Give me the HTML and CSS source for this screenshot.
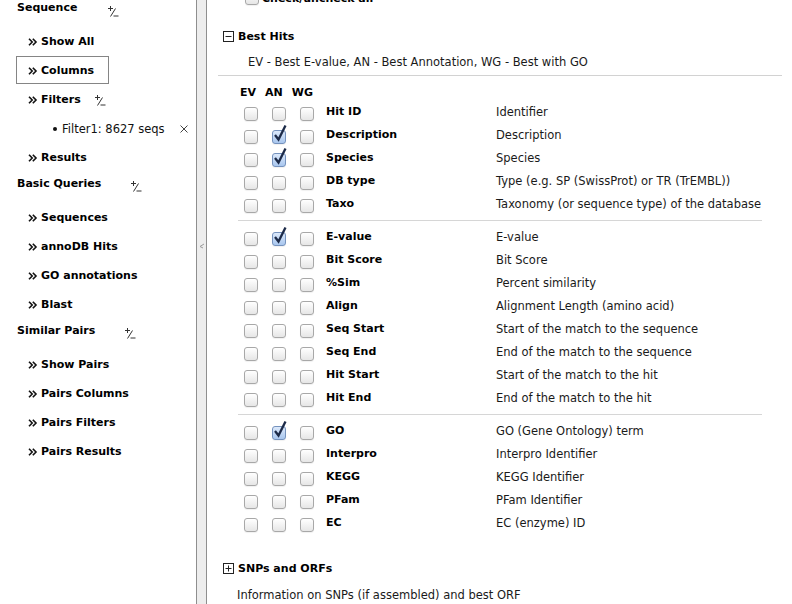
FILE: index.html
```html
<!DOCTYPE html>
<html>
<head>
<meta charset="utf-8">
<link rel="stylesheet" href="styles.css">
</head>
<body>
<div class="app">
  <nav class="nav">
    <div class="section">
      <div class="section-head">Sequence<svg class="pm pm-head pm-seq" width="12" height="12" viewBox="0 0 12 12"><path d="M1 3.5H6M3.5 1V6M3.5 11.5L8.5 3.5M6.5 11H11.5"/></svg></div>
      <div class="item"><svg class="raq" width="13" height="8" viewBox="0 0 13 8"><path d="M1 0.8L4.2 4L1 7.2M4.8 0.8L8 4L4.8 7.2"/></svg>Show All</div>
      <div class="item item-boxed"><svg class="raq" width="13" height="8" viewBox="0 0 13 8"><path d="M1 0.8L4.2 4L1 7.2M4.8 0.8L8 4L4.8 7.2"/></svg>Columns</div>
      <div class="item"><svg class="raq" width="13" height="8" viewBox="0 0 13 8"><path d="M1 0.8L4.2 4L1 7.2M4.8 0.8L8 4L4.8 7.2"/></svg>Filters<svg class="pm pm-filters" width="12" height="12" viewBox="0 0 12 12"><path d="M1 3.5H6M3.5 1V6M3.5 11.5L8.5 3.5M6.5 11H11.5"/></svg></div>
      <div class="item filter"><span class="dot"></span><span class="filter-text">Filter1: 8627 seqs</span><svg class="x" width="8" height="8" viewBox="0 0 8 8"><path d="M0.5 0.5L7.5 7.5M7.5 0.5L0.5 7.5"/></svg></div>
      <div class="item"><svg class="raq" width="13" height="8" viewBox="0 0 13 8"><path d="M1 0.8L4.2 4L1 7.2M4.8 0.8L8 4L4.8 7.2"/></svg>Results</div>
    </div>
    <div class="section">
      <div class="section-head">Basic Queries<svg class="pm pm-head" width="12" height="12" viewBox="0 0 12 12"><path d="M1 3.5H6M3.5 1V6M3.5 11.5L8.5 3.5M6.5 11H11.5"/></svg></div>
      <div class="item"><svg class="raq" width="13" height="8" viewBox="0 0 13 8"><path d="M1 0.8L4.2 4L1 7.2M4.8 0.8L8 4L4.8 7.2"/></svg>Sequences</div>
      <div class="item"><svg class="raq" width="13" height="8" viewBox="0 0 13 8"><path d="M1 0.8L4.2 4L1 7.2M4.8 0.8L8 4L4.8 7.2"/></svg>annoDB Hits</div>
      <div class="item"><svg class="raq" width="13" height="8" viewBox="0 0 13 8"><path d="M1 0.8L4.2 4L1 7.2M4.8 0.8L8 4L4.8 7.2"/></svg>GO annotations</div>
      <div class="item"><svg class="raq" width="13" height="8" viewBox="0 0 13 8"><path d="M1 0.8L4.2 4L1 7.2M4.8 0.8L8 4L4.8 7.2"/></svg>Blast</div>
    </div>
    <div class="section">
      <div class="section-head">Similar Pairs<svg class="pm pm-head" width="12" height="12" viewBox="0 0 12 12"><path d="M1 3.5H6M3.5 1V6M3.5 11.5L8.5 3.5M6.5 11H11.5"/></svg></div>
      <div class="item"><svg class="raq" width="13" height="8" viewBox="0 0 13 8"><path d="M1 0.8L4.2 4L1 7.2M4.8 0.8L8 4L4.8 7.2"/></svg>Show Pairs</div>
      <div class="item"><svg class="raq" width="13" height="8" viewBox="0 0 13 8"><path d="M1 0.8L4.2 4L1 7.2M4.8 0.8L8 4L4.8 7.2"/></svg>Pairs Columns</div>
      <div class="item"><svg class="raq" width="13" height="8" viewBox="0 0 13 8"><path d="M1 0.8L4.2 4L1 7.2M4.8 0.8L8 4L4.8 7.2"/></svg>Pairs Filters</div>
      <div class="item"><svg class="raq" width="13" height="8" viewBox="0 0 13 8"><path d="M1 0.8L4.2 4L1 7.2M4.8 0.8L8 4L4.8 7.2"/></svg>Pairs Results</div>
    </div>
  </nav>
  <div class="splitter"><svg class="grip" width="6" height="6" viewBox="0 0 6 6"><path d="M5 1L1 3.5L4 5"/></svg></div>
  <main class="main">
    <div class="check-all"><span class="cb"></span><span class="check-all-label">Check/uncheck all</span></div>

    <div class="group-head"><svg class="tog" width="11" height="11" viewBox="0 0 11 11"><rect x="0.5" y="0.5" width="10" height="10"/><path d="M2.5 5.5H8.5"/></svg>Best Hits</div>
    <div class="hint">EV - Best E-value, AN - Best Annotation, WG - Best with GO</div>
    <div class="rule"></div>

    <div class="table">
      <div class="thead"><span>EV</span><span>AN</span><span>WG</span></div>
      <div class="rows">
        <div class="row"><span class="cb"></span><span class="cb"></span><span class="cb"></span><span class="lbl">Hit ID</span><span class="desc">Identifier</span></div>
        <div class="row"><span class="cb"></span><span class="cb on"><svg class="tick" width="14" height="20" viewBox="0 0 14 20"><path d="M2 11L5.5 15.5L12.5 1.5"/></svg></span><span class="cb"></span><span class="lbl">Description</span><span class="desc">Description</span></div>
        <div class="row"><span class="cb"></span><span class="cb on"><svg class="tick" width="14" height="20" viewBox="0 0 14 20"><path d="M2 11L5.5 15.5L12.5 1.5"/></svg></span><span class="cb"></span><span class="lbl">Species</span><span class="desc">Species</span></div>
        <div class="row"><span class="cb"></span><span class="cb"></span><span class="cb"></span><span class="lbl">DB type</span><span class="desc">Type (e.g. SP (SwissProt) or TR (TrEMBL))</span></div>
        <div class="row"><span class="cb"></span><span class="cb"></span><span class="cb"></span><span class="lbl">Taxo</span><span class="desc">Taxonomy (or sequence type) of the database</span></div>
      </div>
      <div class="sep"></div>
      <div class="rows">
        <div class="row"><span class="cb"></span><span class="cb on"><svg class="tick" width="14" height="20" viewBox="0 0 14 20"><path d="M2 11L5.5 15.5L12.5 1.5"/></svg></span><span class="cb"></span><span class="lbl">E-value</span><span class="desc">E-value</span></div>
        <div class="row"><span class="cb"></span><span class="cb"></span><span class="cb"></span><span class="lbl">Bit Score</span><span class="desc">Bit Score</span></div>
        <div class="row"><span class="cb"></span><span class="cb"></span><span class="cb"></span><span class="lbl">%Sim</span><span class="desc">Percent similarity</span></div>
        <div class="row"><span class="cb"></span><span class="cb"></span><span class="cb"></span><span class="lbl">Align</span><span class="desc">Alignment Length (amino acid)</span></div>
        <div class="row"><span class="cb"></span><span class="cb"></span><span class="cb"></span><span class="lbl">Seq Start</span><span class="desc">Start of the match to the sequence</span></div>
        <div class="row"><span class="cb"></span><span class="cb"></span><span class="cb"></span><span class="lbl">Seq End</span><span class="desc">End of the match to the sequence</span></div>
        <div class="row"><span class="cb"></span><span class="cb"></span><span class="cb"></span><span class="lbl">Hit Start</span><span class="desc">Start of the match to the hit</span></div>
        <div class="row"><span class="cb"></span><span class="cb"></span><span class="cb"></span><span class="lbl">Hit End</span><span class="desc">End of the match to the hit</span></div>
      </div>
      <div class="sep"></div>
      <div class="rows">
        <div class="row"><span class="cb"></span><span class="cb on"><svg class="tick" width="14" height="20" viewBox="0 0 14 20"><path d="M2 11L5.5 15.5L12.5 1.5"/></svg></span><span class="cb"></span><span class="lbl">GO</span><span class="desc">GO (Gene Ontology) term</span></div>
        <div class="row"><span class="cb"></span><span class="cb"></span><span class="cb"></span><span class="lbl">Interpro</span><span class="desc">Interpro Identifier</span></div>
        <div class="row"><span class="cb"></span><span class="cb"></span><span class="cb"></span><span class="lbl">KEGG</span><span class="desc">KEGG Identifier</span></div>
        <div class="row"><span class="cb"></span><span class="cb"></span><span class="cb"></span><span class="lbl">PFam</span><span class="desc">PFam Identifier</span></div>
        <div class="row"><span class="cb"></span><span class="cb"></span><span class="cb"></span><span class="lbl">EC</span><span class="desc">EC (enzyme) ID</span></div>
      </div>
    </div>

    <div class="group-head group-snps"><svg class="tog" width="11" height="11" viewBox="0 0 11 11"><rect x="0.5" y="0.5" width="10" height="10"/><path d="M2.5 5.5H8.5M5.5 2.5V8.5"/></svg>SNPs and ORFs</div>
    <div class="info">Information on SNPs (if assembled) and best ORF</div>
  </main>
</div>
</body>
</html>
```

FILE: styles.css
```css
html, body {
  margin: 0;
  padding: 0;
  background: #fff;
}
body {
  font-family: "DejaVu Sans", "Liberation Sans", sans-serif;
  font-size: 11.5px;
  color: #000;
}
.app {
  display: flex;
  width: 792px;
  height: 604px;
  overflow: hidden;
}

/* ---------- left navigation ---------- */
.nav {
  width: 196px;
  flex: none;
  background: #fff;
}
.section + .section {
  margin-top: 4px;
}
.section-head {
  height: 15px;
  line-height: 15px;
  padding-left: 17px;
  margin-bottom: 12px;
  font-weight: bold;
  font-size: 11px;
  display: flex;
  align-items: center;
}
.item {
  height: 29px;
  display: flex;
  align-items: center;
  padding-left: 28px;
  font-weight: bold;
  font-size: 11px;
  box-sizing: border-box;
}
.raq {
  flex: none;
  fill: none;
  stroke: #111;
  stroke-width: 1.6;
  margin-top: 1px;
}
.item-boxed {
  margin-left: 16px;
  padding-left: 11px;
  width: 93px;
  border: 1px solid #858585;
  height: 28px;
  margin-bottom: 1px;
}
.pm {
  flex: none;
  fill: none;
  stroke: #333;
  stroke-width: 1;
}
.pm-head {
  margin-left: 29px;
  margin-top: 5px;
}
.pm-seq {
  margin-left: 30px;
  margin-top: 6px;
}
.pm-filters {
  margin-left: 13px;
}
.filter {
  font-weight: normal;
  font-size: 11.5px;
  padding-left: 53px;
}
.dot {
  width: 4px;
  height: 4px;
  border-radius: 50%;
  background: #111;
  margin-right: 5px;
  flex: none;
}
.filter-text {
  color: #111;
}
.x {
  margin-left: auto;
  margin-right: 8px;
  fill: none;
  stroke: #444;
  stroke-width: 1;
}

/* ---------- splitter ---------- */
.splitter {
  width: 9px;
  flex: none;
  background: #ededed;
  border-left: 1px solid #8e8e8e;
  border-right: 1px solid #8e8e8e;
  position: relative;
}
.grip {
  position: absolute;
  left: 2px;
  top: 243px;
  fill: none;
  stroke: #9a9a9a;
  stroke-width: 1;
}

/* ---------- main panel ---------- */
.main {
  flex: 1;
  min-width: 0;
  overflow: hidden;
}
.check-all {
  height: 16px;
  margin-top: -10px;
  padding-left: 38px;
  display: flex;
  align-items: center;
  font-weight: bold;
  font-size: 11px;
}
.check-all-label {
  margin-left: 3px;
}
.group-head {
  height: 16px;
  margin-top: 22px;
  padding-left: 16px;
  display: flex;
  align-items: center;
  font-weight: bold;
  font-size: 11px;
}
.tog {
  flex: none;
  margin-right: 4px;
  fill: none;
  stroke: #222;
  stroke-width: 1;
}
.hint {
  height: 16px;
  line-height: 16px;
  margin-top: 10px;
  padding-left: 41px;
  color: #1a1a1a;
}
.rule {
  height: 1px;
  background: #d2d2d2;
  margin: 5px 10px 0 11px;
}
.table {
  margin: 9px 0 0 31px;
  width: 524px;
}
.thead {
  height: 15px;
  display: flex;
  align-items: center;
  gap: 9px;
  padding-left: 2px;
  font-weight: bold;
  font-size: 11px;
}
.row {
  height: 23px;
  display: grid;
  grid-template-columns: 28px 28px 26px 170px 1fr;
  align-items: center;
  padding-left: 6px;
}
.lbl {
  font-weight: bold;
  font-size: 11px;
}
.desc {
  color: #1a1a1a;
  white-space: nowrap;
}
.sep {
  height: 1px;
  background: #d6d6d6;
  margin: 5px 0 4px;
}
.cb {
  display: inline-block;
  position: relative;
  width: 14px;
  height: 14px;
  box-sizing: border-box;
  border: 1px solid #a8a8a8;
  border-radius: 3px;
  background: linear-gradient(#ffffff, #e6e6e6);
  box-shadow: 0 1px 1px rgba(0, 0, 0, 0.06);
  margin-top: 4px;
}
.check-all .cb {
  margin-top: 0;
}
.cb.on {
  border-color: #7592bd;
  background: linear-gradient(#dce9fb, #a8c6ee);
}
.tick {
  position: absolute;
  left: 0;
  top: -7px;
  overflow: visible;
  fill: none;
  stroke: #1c2a48;
  stroke-width: 2.3;
  stroke-linejoin: miter;
}
.group-snps {
  margin-top: 26px;
}
.info {
  height: 16px;
  line-height: 16px;
  margin-top: 11px;
  padding-left: 30px;
  color: #1a1a1a;
}
```
